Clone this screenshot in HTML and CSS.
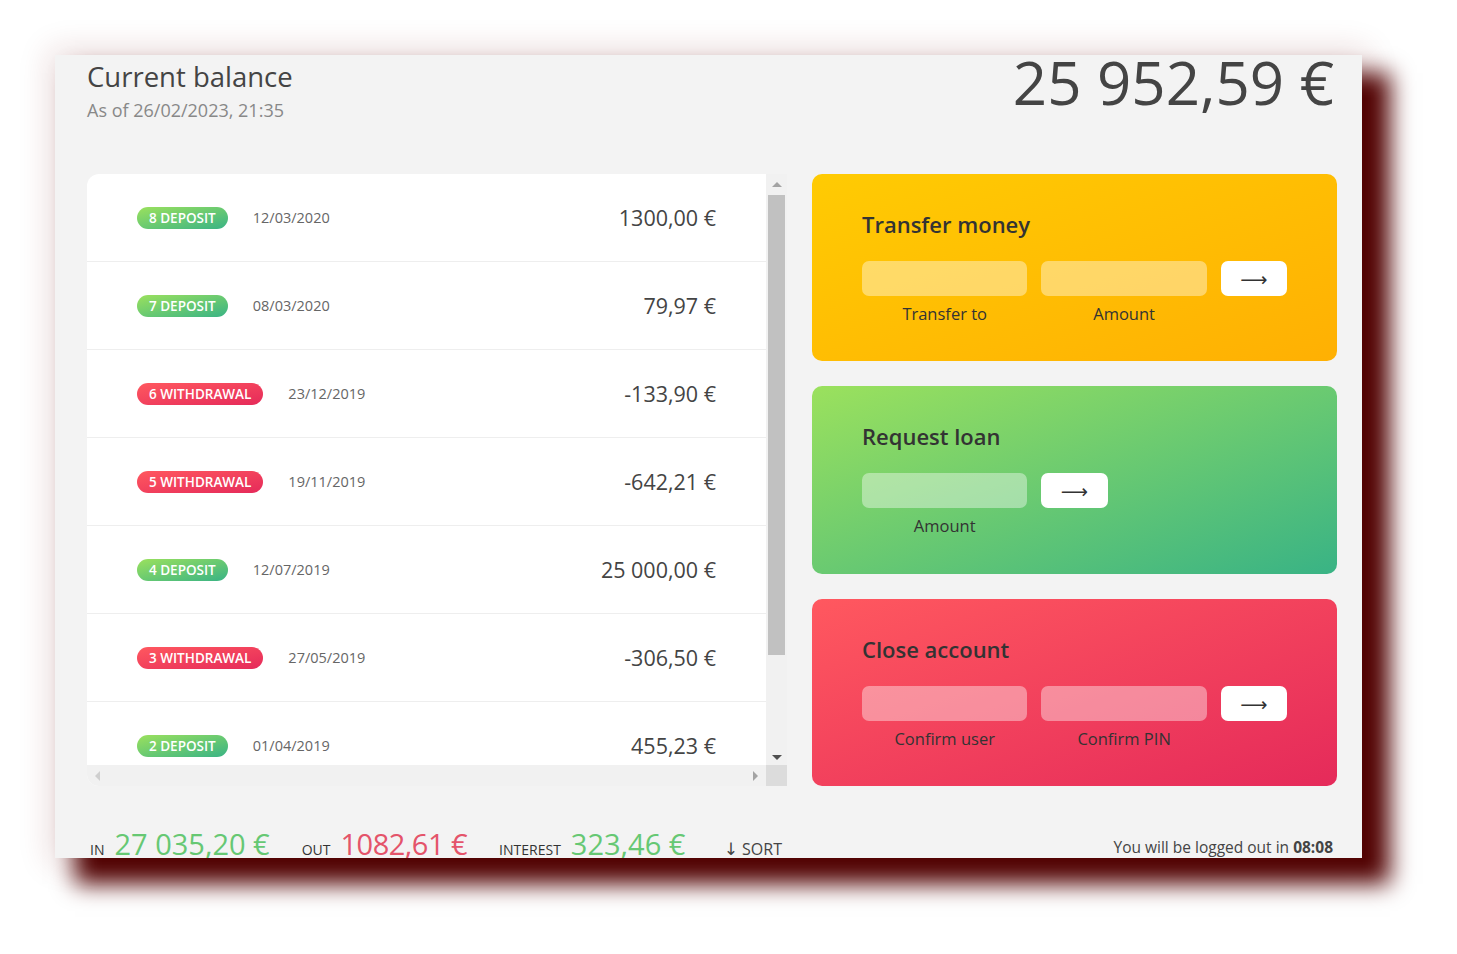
FILE: index.html
```html
<!DOCTYPE html>
<html lang="en">
<head>
<meta charset="utf-8">
<title>Bankist</title>
<link rel="stylesheet" href="styles.css">
</head>
<body>
<main class="app">
  <section class="balance">
    <div>
      <p class="balance-label">Current balance</p>
      <p class="balance-date">As of <span>26/02/2023, 21:35</span></p>
    </div>
    <p class="balance-value">25 952,59 €</p>
  </section>

  <section class="movements-box">
    <div class="movements">
      <div class="row"><span class="type deposit">8 deposit</span><span class="date">12/03/2020</span><span class="value">1300,00 €</span></div>
      <div class="row"><span class="type deposit">7 deposit</span><span class="date">08/03/2020</span><span class="value">79,97 €</span></div>
      <div class="row"><span class="type withdrawal">6 withdrawal</span><span class="date">23/12/2019</span><span class="value">-133,90 €</span></div>
      <div class="row"><span class="type withdrawal">5 withdrawal</span><span class="date">19/11/2019</span><span class="value">-642,21 €</span></div>
      <div class="row"><span class="type deposit">4 deposit</span><span class="date">12/07/2019</span><span class="value">25 000,00 €</span></div>
      <div class="row"><span class="type withdrawal">3 withdrawal</span><span class="date">27/05/2019</span><span class="value">-306,50 €</span></div>
      <div class="row"><span class="type deposit">2 deposit</span><span class="date">01/04/2019</span><span class="value">455,23 €</span></div>
      <div class="row"><span class="type deposit">1 deposit</span><span class="date">18/11/2019</span><span class="value">200,00 €</span></div>
    </div>
    <div class="vscroll">
      <div class="sb-btn"><span class="tri up"></span></div>
      <div class="thumb"></div>
      <div class="sb-btn"><span class="tri down"></span></div>
    </div>
    <div class="hscroll">
      <div class="sb-btn"><span class="tri left"></span></div>
      <div class="sb-btn"><span class="tri right"></span></div>
    </div>
    <div class="corner"></div>
  </section>

  <section class="operation transfer">
    <h2>Transfer money</h2>
    <form class="form form-3">
      <input class="field" type="text">
      <input class="field" type="text">
      <button class="btn" type="button">⟶</button>
      <label class="form-label">Transfer to</label>
      <label class="form-label">Amount</label>
    </form>
  </section>

  <section class="operation loan">
    <h2>Request loan</h2>
    <form class="form form-loan">
      <input class="field" type="text">
      <button class="btn" type="button">⟶</button>
      <span></span>
      <label class="form-label">Amount</label>
    </form>
  </section>

  <section class="operation close">
    <h2>Close account</h2>
    <form class="form form-3">
      <input class="field" type="text">
      <input class="field" type="text">
      <button class="btn" type="button">⟶</button>
      <label class="form-label">Confirm user</label>
      <label class="form-label">Confirm PIN</label>
    </form>
  </section>

  <section class="summary">
    <p class="summary-label">In</p>
    <p class="summary-value in">27 035,20 €</p>
    <p class="summary-label">Out</p>
    <p class="summary-value out">1082,61 €</p>
    <p class="summary-label">Interest</p>
    <p class="summary-value interest">323,46 €</p>
    <button class="btn-sort" type="button"><span class="sort-arrow">↓</span> SORT</button>
  </section>

  <p class="logout-timer">You will be logged out in <span>08:08</span></p>
</main>
</body>
</html>
```

FILE: styles.css
```css
* { box-sizing: border-box; }

html, body { min-height: 100vh; }

body {
  margin: 0;
  padding: 55px 0 96px 55px;
  background: #ffffff;
  font-family: "Open Sans", "Noto Sans", sans-serif;
  color: #444;
}

p { margin: 0; }

.app {
  width: 1307px;
  height: 803px;
  padding-left: 32px;
  background: #f3f3f3;
  overflow: hidden;
  display: grid;
  grid-template-columns: 700px 525px;
  grid-template-rows: 94px 187px 188px 187px auto;
  column-gap: 25px;
  row-gap: 25px;
  box-shadow: 24px 22px 22px 4px #520303, 0 0 30px 6px rgba(120, 20, 20, 0.14);
}

/* balance */
.balance {
  grid-column: 1 / span 2;
  display: flex;
  justify-content: space-between;
  align-items: flex-start;
  padding-right: 3px;
}

.balance-label {
  margin-top: 5px;
  font-size: 27.5px;
  font-weight: 500;
  line-height: 33px;
  color: #444;
}

.balance-date {
  margin-top: 5px;
  font-size: 18px;
  line-height: 24px;
  color: #888;
}

.balance-value {
  font-size: 60px;
  font-weight: 400;
  line-height: 50px;
  padding-top: 2px;
  color: #444;
}

/* movements */
.movements-box {
  grid-row: 2 / span 3;
  background: #fff;
  border-radius: 12px 0 0 12px;
  overflow: hidden;
  display: grid;
  grid-template-columns: 679px 21px;
  grid-template-rows: 591px 21px;
}

.movements {
  overflow: hidden;
}

.row {
  height: 88px;
  padding: 0 50px;
  display: flex;
  align-items: center;
  border-bottom: 1px solid #eee;
}

.type {
  font-size: 13.5px;
  font-weight: 600;
  text-transform: uppercase;
  color: #fff;
  height: 22px;
  line-height: 22px;
  padding: 0 12px;
  border-radius: 11px;
  margin-right: 25px;
}

.deposit { background-image: linear-gradient(to top left, #39b385, #9be15d); }
.withdrawal { background-image: linear-gradient(to top left, #e52a5a, #ff585f); }

.date {
  font-size: 14.5px;
  font-weight: 500;
  color: #666;
}

.value {
  margin-left: auto;
  font-size: 21.5px;
  color: #444;
}

/* scrollbars */
.vscroll {
  background: #f1f1f1;
  display: flex;
  flex-direction: column;
}

.sb-btn {
  width: 21px;
  height: 21px;
  flex: none;
  display: flex;
  align-items: center;
  justify-content: center;
}

.vscroll .thumb {
  height: 460px;
  margin: 0 2px;
  background: #c1c1c1;
}

.vscroll .sb-btn:last-child { margin-top: auto; }

.hscroll {
  background: #f1f1f1;
  display: flex;
  justify-content: space-between;
}

.corner { background: #dcdcdc; }

.tri {
  width: 0;
  height: 0;
  border-style: solid;
}

.tri.up { border-width: 0 5px 5px 5px; border-color: transparent transparent #a3a3a3 transparent; }
.tri.down { border-width: 5px 5px 0 5px; border-color: #505050 transparent transparent transparent; margin-top: 5px; }
.tri.left { border-width: 5px 5px 5px 0; border-color: transparent #cfcfcf transparent transparent; }
.tri.right { border-width: 5px 0 5px 5px; border-color: transparent transparent transparent #a3a3a3; }

/* operations */
.operation {
  border-radius: 10px;
  padding: 35px 50px 0;
  color: #333;
}

.operation h2 {
  margin: 0 0 21px;
  font-size: 22px;
  font-weight: 600;
  line-height: 31px;
  color: #333;
}

.transfer { background-image: linear-gradient(to top left, #ffb003, #ffcb03); }
.loan { background-image: linear-gradient(to top left, #39b385, #9be15d); }
.close { background-image: linear-gradient(to top left, #e52a5a, #ff585f); }

.form {
  display: grid;
  grid-template-columns: 2.5fr 2.5fr 1fr;
  column-gap: 14px;
  row-gap: 7px;
  margin: 0;
}

.form-loan { grid-template-columns: 2.5fr 1fr 2.5fr; }

.field {
  height: 35px;
  border: none;
  border-radius: 7px;
  background: rgba(255, 255, 255, 0.4);
  width: 100%;
}

.btn {
  height: 35px;
  border: none;
  border-radius: 7px;
  background: #fff;
  font-family: "DejaVu Sans", sans-serif;
  font-size: 19px;
  color: #333;
  padding: 0;
}

.form-label {
  font-size: 16.5px;
  line-height: 22px;
  text-align: center;
  color: #333;
}

/* summary */
.summary {
  display: flex;
  align-items: baseline;
  padding: 0 3px;
  margin-top: 18px;
}

.summary-label {
  font-size: 14px;
  font-weight: 500;
  text-transform: uppercase;
  margin-right: 10px;
  color: #333;
}

.summary-value {
  font-size: 29px;
  line-height: 1;
  margin-right: 32px;
}

.summary-value.out { letter-spacing: -0.5px; }
.summary-value.in, .summary-value.interest { color: #66c873; }
.summary-value.out { color: #e4546a; }

.btn-sort {
  margin-left: auto;
  margin-right: 2px;
  border: none;
  background: none;
  padding: 0;
  font-family: "Open Sans", sans-serif;
  font-size: 16px;
  color: #444;
}

.sort-arrow {
  font-family: "DejaVu Sans", sans-serif;
  font-size: 17px;
}

.logout-timer {
  margin-top: 25px;
  padding-right: 4px;
  text-align: right;
  font-size: 15.5px;
  color: #444;
}

.logout-timer span { font-weight: 700; }
```
